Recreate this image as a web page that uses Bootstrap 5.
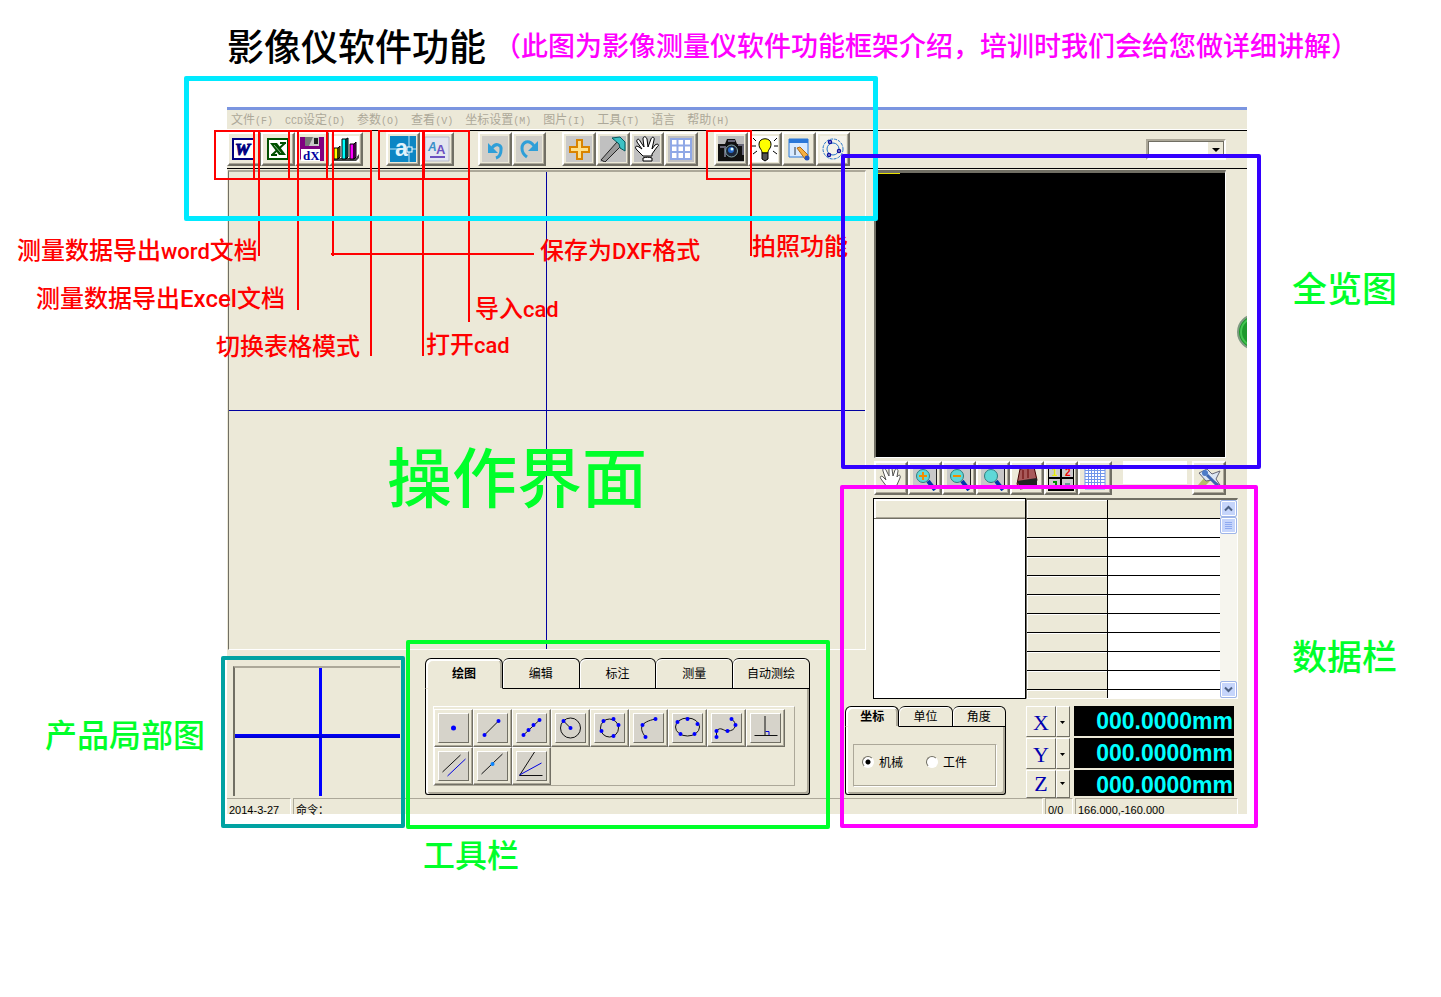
<!DOCTYPE html>
<html lang="zh-CN">
<head>
<meta charset="utf-8">
<meta name="viewport" content="width=device-width, initial-scale=1">
<title>影像仪软件功能</title>
<link href="https://cdn.jsdelivr.net/npm/bootstrap@5.3.0/dist/css/bootstrap.min.css" rel="stylesheet">
<style>
:root{--face:#ece9d8;--shade:#aca899;--deep:#716f64;--navy:#0000a0}
body{background:#fff;color:#000;font-family:"Liberation Sans","Noto Sans CJK SC",sans-serif;font-size:12px;line-height:16px}
.hei{font-family:"Noto Sans CJK SC",sans-serif;font-weight:500;white-space:nowrap;margin:0}
button,input,select{border-radius:0;color:#000}
.page-head{height:107px;padding:22px 0 0 227px}
.page-head h1{font-size:37px;line-height:46px}
.page-head p{font-size:27px;line-height:46px;color:#f0f;margin-left:8px}
.stage{display:grid;grid-template-columns:227px minmax(0,1fr) 194px}
.green{color:#00ff2a}
.side-left{padding:0 0 63px 45px}
.side-right{padding:160px 0 0 45px}
.side-right .hei{font-size:35px;line-height:40px}
.side-right .hei+.hei{margin-top:328px}
.side-left .hei{font-size:32px;line-height:36px}
/* application window */
.app{background:var(--face);border-top:3px solid #7b95e0}
.menu{height:21px;border-bottom:1px solid #000;box-shadow:inset 0 -1px #fff;padding-left:4px;gap:12px}
.menu a{color:var(--shade);text-decoration:none;font-family:"Noto Sans CJK SC",sans-serif;white-space:nowrap;line-height:18px;display:flex;align-items:baseline}
.menu span{font-family:"Liberation Mono",monospace;font-size:10px}
.tools{height:38px;border-bottom:1px solid #000;padding-top:1px}
.tb{width:34px;height:34px;padding:2px;border:2px solid;border-color:#fff var(--deep) var(--deep) #fff;background:var(--face);box-shadow:inset -1px -1px var(--shade);display:flex;align-items:center;justify-content:center;flex:none}
.tb svg{width:26px;height:26px;display:block}
.tb text{font-family:"Liberation Serif",serif;font-weight:700}
.tb .sans{font-family:"Liberation Sans",sans-serif}
.ml-a{margin-left:23px}.ml-b{margin-left:24px}.ml-c{margin-left:16px}
.zoomsel{width:80px;height:21px;border:2px solid;border-color:var(--shade) #fff #fff var(--shade);box-shadow:inset 1px 1px var(--deep);margin:7px 21px 0 auto;appearance:none;background:#fff url("data:image/svg+xml,%3Csvg xmlns='http://www.w3.org/2000/svg' width='16' height='17'%3E%3Cpath fill='%23ece9d8' d='M0 0h16v17H0z'/%3E%3Cpath d='M15.5 0v16.500H0' fill='none' stroke='%23716f64'/%3E%3Cpath d='M4 7h8l-4 4z'/%3E%3C/svg%3E") no-repeat right center}
.work{display:grid;grid-template-columns:minmax(0,1fr) 28px 374px;grid-template-rows:481px auto auto}
.canvas{grid-area:1/1/2/3;margin:1px 7px 0 1px;border:solid;border-width:2px 1px 1px 1px;border-color:var(--shade) #fff #fff var(--deep);background:linear-gradient(var(--navy),var(--navy)) center/100% 1px no-repeat}
.canvas::before{content:"";display:block;width:50%;height:100%;border-right:1px solid var(--navy)}
.lower{grid-area:2/1/4/2;min-height:148px;padding:8px 0 0 6px;gap:22px}
.upper-right{grid-area:1/3/3/4;padding:1px 0 7px}
.coords{grid-area:3/2/4/4;height:92px}
.local{width:167px;margin:8px 3px 2px 0;border:solid;border-width:2px 0 0 2px;border-color:var(--shade) transparent transparent var(--deep);background:linear-gradient(#00f,#0000c8) 0 66px/100% 4px no-repeat,linear-gradient(#00f,#00f) 84px 0/3px 100% no-repeat}
/* tab boxes */
.tabrow button{flex:1 1 0;border:1px solid #000;border-left-width:0;border-radius:6px 6px 0 0;background:var(--face);padding:0 0 2px;box-shadow:inset 1px 1px #fff;font-family:"Noto Sans CJK SC",sans-serif;font-size:12px;line-height:14px}
.tabrow button:first-child{border-left-width:1px}
.tabrow .on{font-weight:700;border-bottom-color:transparent;box-shadow:inset 2px 2px #fff,inset -2px 0 var(--shade)}
.tabbody{border:1px solid #000;border-top:0;border-radius:0 0 3px 3px;box-shadow:inset 2px 0 #fff,inset -2px -2px var(--shade)}
.draw{width:385px;height:137px}
.draw .tabrow{height:31px}
.draw .tabbody{padding:17px 14px 8px 7px;height:106px}
.groupbox{border:1px solid;border-color:#fff var(--shade) var(--shade) #fff}
.palette{height:80px;padding-top:2px;align-content:flex-start}
.db{width:39px;height:38px;padding:3px;border:1px solid;border-color:#fff var(--deep) var(--deep) #fff;background:var(--face);box-shadow:inset -1px -1px var(--shade)}
.db svg{display:block;width:31px;height:30px;background:#d6d3ca;border:1px solid;border-color:#fff var(--deep) var(--deep) #fff}
.ln{fill:none;stroke:#111}.pt{fill:#00f}.bl{fill:none;stroke:#0000e0}
.screen{height:288px;margin:0 21px 0 1px;background:linear-gradient(#e8e000,#e8e000) 0 0/24px 1px no-repeat #000;border:solid;border-width:3px 1px 1px 2px;border-color:var(--deep) #fff #fff var(--deep)}
.viewbar{height:37px;margin-right:21px;padding:3px 0 0 1px}
.viewbar input{width:64px;height:23px;border:0;margin-left:11px;padding:0;background:#fff}
.orb{right:0;top:203px;width:10px;height:38px;overflow:hidden}
.orb svg{display:block}
.data{height:201px;margin:3px 9px 0 0}
.list{width:153px;border:1px solid #000;background:#fff}
.list-head{height:20px;background:var(--face);border-bottom:1px solid var(--deep);box-shadow:inset 2px 2px #fff,inset 0 -1px var(--shade)}
.gridwrap{border:solid;border-width:2px 1px 1px 1px;border-color:var(--deep) #fff #fff var(--deep);overflow:hidden}
.gridwrap table{width:100%;border-collapse:collapse;background:#fff}
.gridwrap td,.gridwrap th{height:19px;padding:0;border-bottom:1px solid #000}
.gridwrap th{background:var(--face);width:80px;border-right:1px solid #000;box-shadow:inset 1px 1px #fff}
.gridwrap .top td,.gridwrap .top th{background:var(--face);height:18px}
.scroll{width:17px;background:#f6f5ee;flex:none}
.scroll button{width:17px;height:17px;padding:0;border:1px solid #9fb5e8;border-radius:2px;background:#c6d5fb;box-shadow:inset 0 0 0 1px #fff;display:block}
.scroll svg{display:block;margin:auto}
.axisset{width:161px;height:89px}
.axisset .tabrow{height:21px}
.axisset .tabbody{height:68px;padding:17px 8px 8px 7px}
.axisset .tabrow button{line-height:16px}
.modes{height:43px;border:1px solid;border-color:var(--shade) #fff #fff var(--shade);margin:0;padding:0 0 7px 8px;gap:23px;box-shadow:inset -1px -1px var(--shade)}
.modes label{font-family:"Noto Sans CJK SC",sans-serif;display:flex;align-items:center;gap:5px}
.modes input{appearance:none;width:12px;height:12px;border-radius:50%;border:1px solid;border-color:var(--deep) #fff #fff var(--deep);background:#fff;margin:0}
.modes input:checked{background:radial-gradient(circle,#000 2px,#fff 3px)}
.axes{margin-left:20px}
.axis{height:32px}
.axis:last-child{height:28px}
.axis button{border:1px solid;border-color:#fff var(--deep) var(--deep) #fff;background:var(--face);height:31px;padding:2px 0 0}
.axis:last-child button{height:28px;padding:0}
.axis .nm{width:30px;font:22px/26px "Liberation Serif",serif;color:#0000b0}
.axis .dd{width:14px;margin-right:4px}
.axis .dd svg{display:block;margin:auto}
.axis output{width:160px;height:30px;background:#000;color:#0ff;font-weight:700;font-size:23px;line-height:30px;text-align:right;padding-right:1px}
.axis:last-child output{height:26px}
.status{height:16px;font-size:11px;line-height:22px;gap:2px;padding-right:9px}
.status div{border:solid;border-width:1px 1px 0 1px;border-color:var(--shade) #fff #fff var(--shade);height:16px;padding-left:2px;white-space:nowrap}
.status .first{width:64px;border-left:0}
/* annotation layer */
.note{position:absolute;font-size:24px;line-height:28px;color:#f00}
.note span{font-family:Roboto,sans-serif;font-size:22px}
.note .wide{font-size:24px}
.frame{position:absolute;border:4px solid;border-radius:2px;pointer-events:none}
.wires{position:absolute;left:0;top:0;pointer-events:none}
.toolname{font-size:32px;line-height:36px;padding:21px 0 0 423px}
</style>
</head>
<body>
<main class="position-relative overflow-hidden">
<header class="page-head d-flex">
  <h1 class="hei">影像仪软件功能</h1>
  <p class="hei">（此图为影像测量仪软件功能框架介绍，培训时我们会给您做详细讲解）</p>
</header>
<div class="stage">
  <aside class="side-left d-flex flex-column justify-content-end"><p class="hei green">产品局部图</p></aside>
  <section class="app position-relative">
    <nav class="menu d-flex">
      <a href="#">文件<span>(F)</span></a><a href="#"><span>CCD</span>设定<span>(D)</span></a><a href="#">参数<span>(O)</span></a><a href="#">查看<span>(V)</span></a><a href="#">坐标设置<span>(M)</span></a><a href="#">图片<span>(I)</span></a><a href="#">工具<span>(T)</span></a><a href="#">语言</a><a href="#">帮助<span>(H)</span></a>
    </nav>
    <div class="tools d-flex">
      <button class="tb" aria-label="Word"><svg viewBox="0 0 26 26"><rect x="2" y="3" width="21" height="20" fill="#fff" stroke="#000080" stroke-width="2"/><text x="4" y="19" font-size="17" font-style="italic" fill="#000080" stroke="#000080">W</text></svg></button>
      <button class="tb" aria-label="Excel"><svg viewBox="0 0 26 26"><rect x="3" y="3" width="20" height="20" fill="#fff" stroke="#005000" stroke-width="2"/><path d="M5 7h7l9 12h-7z" fill="#005000"/><path d="M20 7L7 19M6 19h6M15 7h6" stroke="#005000" stroke-width="2"/><path d="M9 9l7 8" stroke="#8fb98f"/></svg></button>
      <button class="tb" aria-label="DXF"><svg viewBox="0 0 26 26"><path d="M1 1h24v24H3l-2-2z" fill="#800080"/><path d="M6 1h14v9H6z" fill="#c8c8c8"/><path d="M6 1h8l-4 9H6z" fill="#777"/><path d="M15 2h4v6h-4z" fill="#222"/><path d="M2 13h19v12H2z" fill="#fff"/><text x="4" y="24" font-size="13" fill="#0000a0">dX</text></svg></button>
      <button class="tb" aria-label="表格"><svg viewBox="0 0 26 26"><path fill="#fff" d="M0 0h26v26H0z"/><path d="M1 22h22l3-4v4l-3 3H1z" fill="#444"/><g stroke="#000"><path d="M1 12h4v11H1z" fill="#ff0"/><path d="M5 12l2-2v11l-2 2z" fill="#880"/><path d="M9 3h4v20H9z" fill="#0ff"/><path d="M13 3l2-1v19l-2 2z" fill="#008080"/><path d="M17 8h4v15h-4z" fill="#f0f"/><path d="M21 8l2-2v15l-2 2z" fill="#808"/></g></svg></button>
      <button class="tb ml-a" aria-label="打开CAD"><svg viewBox="0 0 26 26"><path fill="#0c86c4" d="M0 0h26v26H0z"/><path d="M0 13h26M19 0v26" stroke="#bfe6f7"/><text class="sans" x="5" y="20" font-size="23" fill="#e0f3fc">a</text><rect x="17" y="11" width="5" height="5" fill="#0c86c4" stroke="#fff"/></svg></button>
      <button class="tb" aria-label="导入CAD"><svg viewBox="0 0 26 26"><path fill="#e3e5f0" stroke="#b5b8ca" d="M1 1h24v24H1z"/><text class="sans" x="4" y="15" font-size="12" font-style="italic" fill="#3a90c8">A</text><text class="sans" x="12" y="18" font-size="13" fill="#6b4fc0">A</text><path d="M6 21h15" stroke="#6b4fc0" stroke-width="2"/></svg></button>
      <button class="tb ml-b" aria-label="撤销"><svg viewBox="0 0 26 26"><path fill="#d0cec8" d="M0 0h26v26H0z"/><path d="M10 12c4-6 10-3 9 2 0 4-2 7-5 8" fill="none" stroke="#2f9fd8" stroke-width="3"/><path d="M6 7v10h10z" fill="#2f9fd8"/></svg></button>
      <button class="tb" aria-label="重做"><svg viewBox="0 0 26 26"><path fill="#d0cec8" d="M0 0h26v26H0z"/><path d="M11 21C4 16 5 8 10 6c4-1 6 1 8 4" fill="none" stroke="#2f9fd8" stroke-width="3"/><path d="M22 5v10H12z" fill="#2f9fd8"/></svg></button>
      <button class="tb ml-c" aria-label="十字"><svg viewBox="0 0 26 26"><path fill="#c9c9c9" d="M0 0h26v26H0z"/><path d="M11 4h5v7h7v5h-7v7h-5v-7H4v-5h7z" fill="#ffe08a" stroke="#d98400" stroke-width="2"/></svg></button>
      <button class="tb" aria-label="拾取"><svg viewBox="0 0 26 26"><path fill="#c0c0c0" d="M0 0h26v26H0z"/><path d="M1 24L17 6l4 4L5 26z" fill="#999" stroke="#222"/><path d="M12 2l8-1 5 5v9l-5-3-1-4z" fill="#3ec1c4" stroke="#05585b"/></svg></button>
      <button class="tb" aria-label="平移"><svg viewBox="0 0 26 26"><path fill="#c0c0c0" d="M0 0h26v26H0z"/><path d="M9 20L3 14c-3-3-1-5 2-3l3 2L3 6c-1-3 2-4 3-1l4 6L9 3c0-3 3-3 4 0l1 8 3-8c1-3 4-2 3 1l-2 9 3-4c3-2 5 0 2 2l-5 7v2H9z" fill="#fff" stroke="#000"/><path d="M9 22c3-1 6-1 9 0v3H9z" fill="#fff" stroke="#000"/></svg></button>
      <button class="tb" aria-label="网格"><svg viewBox="0 0 26 26"><path fill="#c0c0c0" d="M0 0h26v26H0z"/><path d="M3 3h20v20H3z" fill="#fff"/><path d="M3 3h20v20H3zM3 9.500h20M3 16h20M9.500 3v20M16 3v20" fill="none" stroke="#8fa8e6" stroke-width="2"/></svg></button>
      <button class="tb ml-c" aria-label="拍照"><svg viewBox="0 0 26 26"><path fill="#bbb" d="M0 0h26v26H0z"/><path d="M0 8h7l2-5h8l2 5h7v17H0z" fill="#111"/><path d="M10 5h7M2 11h5v10M20 9h5v10" stroke="#667" fill="none" stroke-width="2"/><circle cx="13.500" cy="15" r="6" fill="#1b2638" stroke="#8aa"/><circle cx="13" cy="14" r="3" fill="#2569c8"/><circle cx="14" cy="13" r="1.500" fill="#dff"/></svg></button>
      <button class="tb" aria-label="灯光"><svg viewBox="0 0 26 26"><path fill="#fff" d="M0 0h26v26H0z"/><path d="M10 17c0-4-3-4-3-9 0-7 12-7 12 0 0 5-3 5-3 9z" fill="#ff0" stroke="#000"/><path d="M10 17h6v6l-3 2-3-2z" fill="#555" stroke="#000"/><path d="M1 2l3 3M0 10h4M1 18l4-3M25 2l-3 3M26 10h-4M25 18l-4-3" stroke="#000"/></svg></button>
      <button class="tb" aria-label="编辑"><svg viewBox="0 0 26 26"><path d="M3 3h19v18H3z" fill="#d9ebff" stroke="#2b78d8"/><path d="M3 3h19v4H3z" fill="#2b78d8"/><path d="M9 11v8" stroke="#234"/><path d="M11 12l3-1 8 8-3 4z" fill="#f5b040" stroke="#b46a10"/><circle cx="21" cy="22" r="2.500" fill="#2455c0"/></svg></button>
      <button class="tb" aria-label="测圆"><svg viewBox="0 0 26 26"><path fill="#f5f3ea" d="M0 0h26v26H0z"/><g fill="none" stroke="#2674c8"><circle cx="13" cy="13" r="10" stroke-dasharray="3 1"/><circle cx="13" cy="13" r="6"/></g><g fill="#fff" stroke="#1010a0" stroke-width="1.500"><circle cx="10" cy="6" r="1.500"/><circle cx="19" cy="15" r="1.500"/><circle cx="9" cy="19" r="1.500"/></g></svg></button>
      <select class="zoomsel" aria-label="倍率"><option></option></select>
    </div>
    <div class="work">
      <div class="canvas"></div>
      <div class="lower d-flex">
        <div class="local"></div>
        <div class="draw">
          <div class="tabrow d-flex"><button class="on">绘图</button><button>编辑</button><button>标注</button><button>测量</button><button>自动测绘</button></div>
          <div class="tabbody"><div class="groupbox palette d-flex flex-wrap">
            <button class="db" aria-label="点"><svg viewBox="0 0 28 28"><circle class="pt" cx="14" cy="14" r="2.500"/></svg></button>
            <button class="db" aria-label="线"><svg viewBox="0 0 28 28"><path class="ln" d="M6 21L20 7"/><circle class="pt" cx="6" cy="21" r="2"/><circle class="pt" cx="20" cy="7" r="2"/></svg></button>
            <button class="db" aria-label="多点线"><svg viewBox="0 0 28 28"><path class="ln" d="M6 21L22 6"/><g class="pt"><circle cx="6" cy="21" r="2"/><circle cx="11" cy="16" r="2"/><circle cx="16" cy="11" r="2"/><circle cx="22" cy="6" r="2"/></g></svg></button>
            <button class="db" aria-label="圆"><svg viewBox="0 0 28 28"><circle class="ln" cx="14" cy="14" r="10"/><path class="ln" d="M7 7l7 7"/><g class="pt"><circle cx="7" cy="7" r="2"/><circle cx="14" cy="14" r="2"/></g></svg></button>
            <button class="db" aria-label="多点圆"><svg viewBox="0 0 28 28"><circle class="ln" cx="14" cy="14" r="9"/><g class="pt"><circle cx="8" cy="7" r="2"/><circle cx="18" cy="5" r="2"/><circle cx="23" cy="11" r="2"/><circle cx="18" cy="22" r="2"/><circle cx="6" cy="17" r="2"/></g></svg></button>
            <button class="db" aria-label="弧"><svg viewBox="0 0 28 28"><path class="ln" d="M21 5C6 8 4 14 11 23"/><g class="pt"><circle cx="21" cy="5" r="2"/><circle cx="8" cy="11" r="2"/><circle cx="11" cy="23" r="2"/></g></svg></button>
            <button class="db" aria-label="椭圆"><svg viewBox="0 0 28 28"><ellipse class="ln" cx="14" cy="13" rx="12" ry="9"/><g class="pt"><circle cx="4" cy="8" r="2"/><circle cx="14" cy="5" r="2"/><circle cx="24" cy="10" r="2"/><circle cx="21" cy="20" r="2"/><circle cx="7" cy="20" r="2"/></g></svg></button>
            <button class="db" aria-label="曲线"><svg viewBox="0 0 28 28"><path class="ln" d="M4 23v-6c4-5 7 0 11 0 9 0 10-8 4-12"/><g class="pt"><circle cx="4" cy="23" r="2"/><circle cx="4" cy="17" r="2"/><circle cx="15" cy="17" r="2"/><circle cx="23" cy="11" r="2"/><circle cx="19" cy="5" r="2"/></g></svg></button>
            <button class="db" aria-label="垂线"><svg viewBox="0 0 28 28"><path class="ln" d="M13.500 2v19M3 21.500h23"/><path class="bl" d="M14 17.500h3.500V21"/></svg></button>
            <button class="db" aria-label="平行线"><svg viewBox="0 0 28 28"><path class="ln" d="M3 20L21 3"/><path class="bl" d="M8 24L26 7"/></svg></button>
            <button class="db" aria-label="中点"><svg viewBox="0 0 28 28"><path class="ln" d="M3 22L24 2"/><circle cx="14" cy="12" r="2" fill="#0a84ff"/></svg></button>
            <button class="db" aria-label="角平分线"><svg viewBox="0 0 28 28"><path class="ln" d="M17 0L2 23.500h23"/><path class="bl" d="M2 23L24 11"/></svg></button>
          </div></div>
        </div>
      </div>
      <div class="upper-right">
        <div class="screen"></div>
        <div class="viewbar d-flex">
          <button class="tb" aria-label="拖动"><svg viewBox="0 0 26 26"><path d="M9 22L3 14c-2-3 1-4 3-1l2 2L5 6c-1-3 2-3 3-1l3 6V4c0-3 3-3 3 0l1 7 2-6c1-2 3-1 3 1l-1 6c2-3 4-2 3 1l-4 9z" fill="#fff" stroke="#555"/></svg></button>
          <button class="tb" aria-label="放大"><svg viewBox="0 0 26 26"><path fill="#c8c8c8" d="M1 3h24v20H1z"/><path d="M24.500 4v18M16 22.500h8" stroke="#222"/><path d="M16 16l7 9" stroke="#0038a8" stroke-width="4"/><circle cx="11" cy="11" r="6.500" fill="#5fd8d7" stroke="#2f7d7c"/><path d="M7 11h8M11 7v8" stroke="#f08c00" stroke-width="2"/></svg></button>
          <button class="tb" aria-label="缩小"><svg viewBox="0 0 26 26"><path fill="#c8c8c8" d="M1 3h24v20H1z"/><path d="M24.500 4v18M16 22.500h8" stroke="#222"/><path d="M16 16l7 9" stroke="#0038a8" stroke-width="4"/><circle cx="11" cy="11" r="6.500" fill="#5fd8d7" stroke="#2f7d7c"/><path d="M7 11h8" stroke="#f08c00" stroke-width="2"/></svg></button>
          <button class="tb" aria-label="缩放"><svg viewBox="0 0 26 26"><path fill="#c8c8c8" d="M1 3h24v20H1z"/><path d="M24.500 4v18M16 22.500h8" stroke="#222"/><path d="M16 16l7 9" stroke="#0038a8" stroke-width="4"/><circle cx="11" cy="11" r="6.500" fill="#5fd8d7" stroke="#2f7d7c"/></svg></button>
          <button class="tb" aria-label="记录"><svg viewBox="0 0 26 26"><path d="M6 4l14-2 3 13-3 7-14 2-3-5z" fill="#a85a5a" stroke="#400"/><path d="M3 16l20-3v7l-16 4z" fill="#222"/><path d="M9 5v9M14 4v9" stroke="#600"/></svg></button>
          <button class="tb" aria-label="分屏"><svg viewBox="0 0 26 26"><path d="M0 0h26v26H0z"/><path d="M1 3h11v9H1zM14 3h11v9H14zM1 14h11v10H1zM14 14h11v10H14z" fill="#ccc"/><text class="sans" x="4" y="11" font-size="10" fill="#ee0">1</text><text class="sans" x="17" y="11" font-size="10" fill="#e00">2</text><path d="M5 17h3v5" stroke="#080" fill="none" stroke-width="2"/><path d="M17 19h5" stroke="#065"/></svg></button>
          <button class="tb" aria-label="网格"><svg viewBox="0 0 26 26"><path d="M3 0h20v24H3z" fill="#fff"/><path d="M3 0v24M6.500 0v24M9.500 0v24M12.500 0v24M15.500 0v24M18.500 0v24M23 0v24M3 5.500h20M3 8.500h20M3 11.500h20M3 14.500h20M3 17.500h20M3 20.500h20M3 24h20" stroke="#6f95ea"/></svg></button>
          <input type="text" aria-label="数值">
          <button class="tb ms-auto" aria-label="设置"><svg viewBox="0 0 26 26"><path d="M2 20l7-8 5 4-8 8z" fill="#b5bd6a"/><path d="M3 8l8-4 5 5 8-3-4 8 4 6-8-5-6 1z" fill="#dde6f4" stroke="#667"/><path d="M11 10l12 12" stroke="#3f66b0" stroke-width="3"/><circle cx="9" cy="8" r="3" fill="#4d7bc8"/></svg></button>
        </div>
        <div class="data d-flex">
          <div class="list"><div class="list-head"></div></div>
          <div class="gridwrap d-flex flex-fill">
            <div class="flex-fill overflow-hidden"><table><tbody>
              <tr class="top"><th></th><td></td></tr><tr><th></th><td></td></tr><tr><th></th><td></td></tr><tr><th></th><td></td></tr><tr><th></th><td></td></tr><tr><th></th><td></td></tr><tr><th></th><td></td></tr><tr><th></th><td></td></tr><tr><th></th><td></td></tr><tr><th></th><td></td></tr><tr><th></th><td></td></tr>
            </tbody></table></div>
            <div class="scroll d-flex flex-column">
              <button aria-label="向上"><svg width="9" height="7"><path d="M1 5.500l3.500-3.500L8 5.500" fill="none" stroke="#4d6185" stroke-width="2"/></svg></button>
              <button aria-label="滑块"><svg width="9" height="9"><path d="M1 1.500h7M1 3.500h7M1 5.500h7M1 7.500h7" stroke="#8faaf0"/></svg></button>
              <button class="mt-auto" aria-label="向下"><svg width="9" height="7"><path d="M1 1.500L4.500 5 8 1.500" fill="none" stroke="#4d6185" stroke-width="2"/></svg></button>
            </div>
          </div>
        </div>
      </div>
      <div class="coords d-flex">
        <div class="axisset">
          <div class="tabrow d-flex"><button class="on">坐标</button><button>单位</button><button>角度</button></div>
          <div class="tabbody"><div class="modes d-flex align-items-center" role="radiogroup">
            <label><input type="radio" name="mode" checked>机械</label><label><input type="radio" name="mode">工件</label>
          </div></div>
        </div>
        <div class="axes">
          <div class="axis d-flex"><button class="nm">X</button><button class="dd" aria-label="X 选项"><svg width="6" height="4"><path d="M0 0h5L2.500 3z"/></svg></button><output>000.0000mm</output></div>
          <div class="axis d-flex"><button class="nm">Y</button><button class="dd" aria-label="Y 选项"><svg width="6" height="4"><path d="M0 0h5L2.500 3z"/></svg></button><output>000.0000mm</output></div>
          <div class="axis d-flex"><button class="nm">Z</button><button class="dd" aria-label="Z 选项"><svg width="6" height="4"><path d="M0 0h5L2.500 3z"/></svg></button><output>000.0000mm</output></div>
        </div>
      </div>
    </div>
    <footer class="status d-flex">
      <div class="first">2014-3-27</div><div class="flex-fill">命令：</div><div style="width:28px">0/0</div><div style="width:163px">166.000,-160.000</div>
    </footer>
    <div class="orb position-absolute"><svg width="38" height="38"><circle cx="18" cy="19" r="17" fill="#1d9a2c" stroke="#7d9a80" stroke-width="2"/><circle cx="18" cy="19" r="14" fill="none" stroke="#45c552" stroke-width="2"/></svg></div>
  </section>
  <aside class="side-right"><p class="hei green">全览图</p><p class="hei green">数据栏</p></aside>
</div>
<p class="hei green toolname">工具栏</p>

<svg class="wires" width="760" height="360" fill="none" stroke="#f00" stroke-width="2">
  <path d="M215 131h156v48H215zM254 131v48M289 131v48M327 131v48M379 131h90v48H379zM424 131v48M707 131h44v48h-44z"/>
  <path d="M259 131v125M298 131v179M333 131v125M331 254h203M371 131v225M423 131v225M469 131v191M751 131v125"/>
</svg>
<p class="hei note" style="left:17px;top:235px">测量数据导出<span>word</span>文档</p>
<p class="hei note" style="left:36px;top:283px">测量数据导出<span class="wide">Excel</span>文档</p>
<p class="hei note" style="left:216px;top:331px">切换表格模式</p>
<p class="hei note" style="left:540px;top:235px">保存为<span>DXF</span>格式</p>
<p class="hei note" style="left:475px;top:293px">导入<span>cad</span></p>
<p class="hei note" style="left:426px;top:329px">打开<span>cad</span></p>
<p class="hei note" style="left:752px;top:231px">拍照功能</p>
<p class="hei green position-absolute" style="left:387px;top:438px;font-size:65px;line-height:72px">操作界面</p>
<div class="frame" style="left:184px;right:563px;top:76px;height:145px;border-width:5px;color:#00eaff"></div>
<div class="frame" style="width:420px;right:180px;top:154px;height:315px;color:#30f"></div>
<div class="frame" style="width:418px;right:183px;top:485px;height:343px;color:#f0f"></div>
<div class="frame" style="left:406px;right:611px;top:640px;height:189px;color:#00ff2a"></div>
<div class="frame" style="left:221px;width:184px;top:656px;height:172px;color:#00a2a2"></div>
</main>
<script src="https://cdn.jsdelivr.net/npm/bootstrap@5.3.0/dist/js/bootstrap.bundle.min.js"></script>
</body>
</html>
